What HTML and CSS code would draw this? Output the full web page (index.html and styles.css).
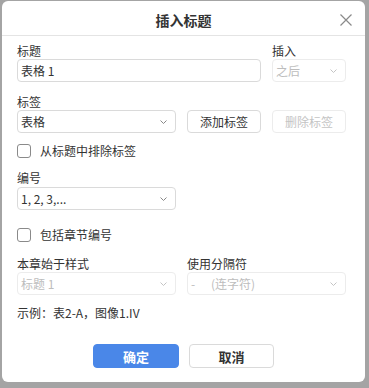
FILE: index.html
```html
<!DOCTYPE html>
<html lang="zh">
<head>
<meta charset="utf-8">
<title>插入标题</title>
<link rel="stylesheet" href="styles.css">
</head>
<body>
<div class="dialog">
  <div class="header">
    <div class="title">插入标题</div>
    <svg class="close" width="12" height="12" viewBox="0 0 12 12"><path d="M0.5 0.5L11.5 11.5M11.5 0.5L0.5 11.5" stroke="#8a8a8a" stroke-width="1.2" fill="none"/></svg>
  </div>
  <div class="body">
    <div class="grid row1">
      <div class="field span2">
        <div class="label">标题</div>
        <div class="input">表格 1</div>
      </div>
      <div class="field">
        <div class="label">插入</div>
        <div class="select disabled"><span>之后</span><svg class="chev" width="7" height="4" viewBox="0 0 7 4"><path d="M0.5 0.5L3.5 3.5L6.5 0.5" stroke="currentColor" fill="none"/></svg></div>
      </div>
    </div>
    <div class="grid row2">
      <div class="field">
        <div class="label">标签</div>
        <div class="select"><span>表格</span><svg class="chev" width="7" height="4" viewBox="0 0 7 4"><path d="M0.5 0.5L3.5 3.5L6.5 0.5" stroke="currentColor" fill="none"/></svg></div>
      </div>
      <div class="field bottom">
        <div class="btn">添加标签</div>
      </div>
      <div class="field bottom">
        <div class="btn disabled">删除标签</div>
      </div>
    </div>
    <div class="check row3"><span class="box"></span><span>从标题中排除标签</span></div>
    <div class="grid row4">
      <div class="field">
        <div class="label tall">编号</div>
        <div class="select"><span>1, 2, 3,...</span><svg class="chev" width="7" height="4" viewBox="0 0 7 4"><path d="M0.5 0.5L3.5 3.5L6.5 0.5" stroke="currentColor" fill="none"/></svg></div>
      </div>
    </div>
    <div class="check row5"><span class="box"></span><span>包括章节编号</span></div>
    <div class="grid2 row6">
      <div class="field">
        <div class="label">本章始于样式</div>
        <div class="select disabled"><span>标题 1</span><svg class="chev" width="7" height="4" viewBox="0 0 7 4"><path d="M0.5 0.5L3.5 3.5L6.5 0.5" stroke="currentColor" fill="none"/></svg></div>
      </div>
      <div class="field">
        <div class="label">使用分隔符</div>
        <div class="select disabled"><span><span class="dash">-</span>(连字符)</span><svg class="chev" width="7" height="4" viewBox="0 0 7 4"><path d="M0.5 0.5L3.5 3.5L6.5 0.5" stroke="currentColor" fill="none"/></svg></div>
      </div>
    </div>
    <div class="example">示例：表2-A，图像1.IV</div>
    <div class="actions">
      <div class="btn primary">确定</div>
      <div class="btn cancel">取消</div>
    </div>
  </div>
</div>
</body>
</html>
```
FILE: styles.css
```css
* { box-sizing: border-box; }
html, body { margin: 0; padding: 0; }
body {
  background: #a4a4a4;
  width: 369px;
  height: 388px;
  overflow: hidden;
  font-family: "Noto Sans CJK SC", "Liberation Sans", sans-serif;
  font-size: 12px;
  color: #333;
}
.dialog {
  margin: 1px 0 0 2px;
  width: 363px;
  height: 381px;
  background: #fff;
  border-radius: 6px;
  display: flex;
  flex-direction: column;
}
.header {
  height: 35px;
  border-bottom: 1px solid #e4e4e4;
  display: flex;
  align-items: center;
  justify-content: center;
  position: relative;
  padding-top: 4px;
}
.title {
  font-size: 14px;
  font-weight: bold;
  color: #333;
  line-height: 18px;
}
.close {
  position: absolute;
  right: 13px;
  top: 13px;
}
.body {
  padding: 0 19px 0 15px;
  display: flex;
  flex-direction: column;
}
.grid {
  display: grid;
  grid-template-columns: 159px 74px 74px;
  column-gap: 11px;
}
.grid2 {
  display: grid;
  grid-template-columns: 159px 159px;
  column-gap: 11px;
}
.span2 { grid-column: span 2; }
.field { display: flex; flex-direction: column; }
.field.bottom { justify-content: flex-end; }
.label { line-height: 16px; height: 16px; color: #333; }
.label.tall { height: 17px; line-height: 16px; }
.input, .select {
  height: 23px;
  border: 1px solid #dadada;
  border-radius: 4px;
  padding: 0 8px 0 3px;
  line-height: 21px;
  color: #333;
  display: flex;
  align-items: center;
  justify-content: space-between;
}
.select .chev { color: #888; margin-top: 1px; }
.select.disabled { border-color: #ececec; color: #bdbdbd; }
.select.disabled .chev { color: #c4c4c4; }
.dash { display: inline-block; width: 20px; }
.btn {
  height: 23px;
  border: 1px solid #dadada;
  border-radius: 4px;
  display: flex;
  align-items: center;
  justify-content: center;
  color: #333;
}
.btn.disabled { border-color: #ececec; color: #c4c4c4; }
.check {
  display: flex;
  align-items: center;
  height: 16px;
  line-height: 16px;
}
.box {
  width: 14px;
  height: 14px;
  border: 1px solid #8a8a8a;
  border-radius: 3px;
  margin-right: 9px;
}
.row1 { margin-top: 7px; }
.row2 { margin-top: 12px; }
.row3 { margin-top: 10px; }
.row4 { margin-top: 11px; }
.row5 { margin-top: 17px; }
.row6 { margin-top: 13px; }
.example { margin-top: 10px; line-height: 16px; }
.actions {
  margin-top: 23px;
  display: flex;
  justify-content: center;
  gap: 10px;
  padding-left: 4px;
}
.actions .btn {
  height: 24px;
  font-size: 13px;
  font-weight: bold;
}
.btn.primary {
  width: 86px;
  background: #4a87e8;
  border-color: #4a87e8;
  color: #fff;
}
.btn.cancel { width: 85px; }
```
